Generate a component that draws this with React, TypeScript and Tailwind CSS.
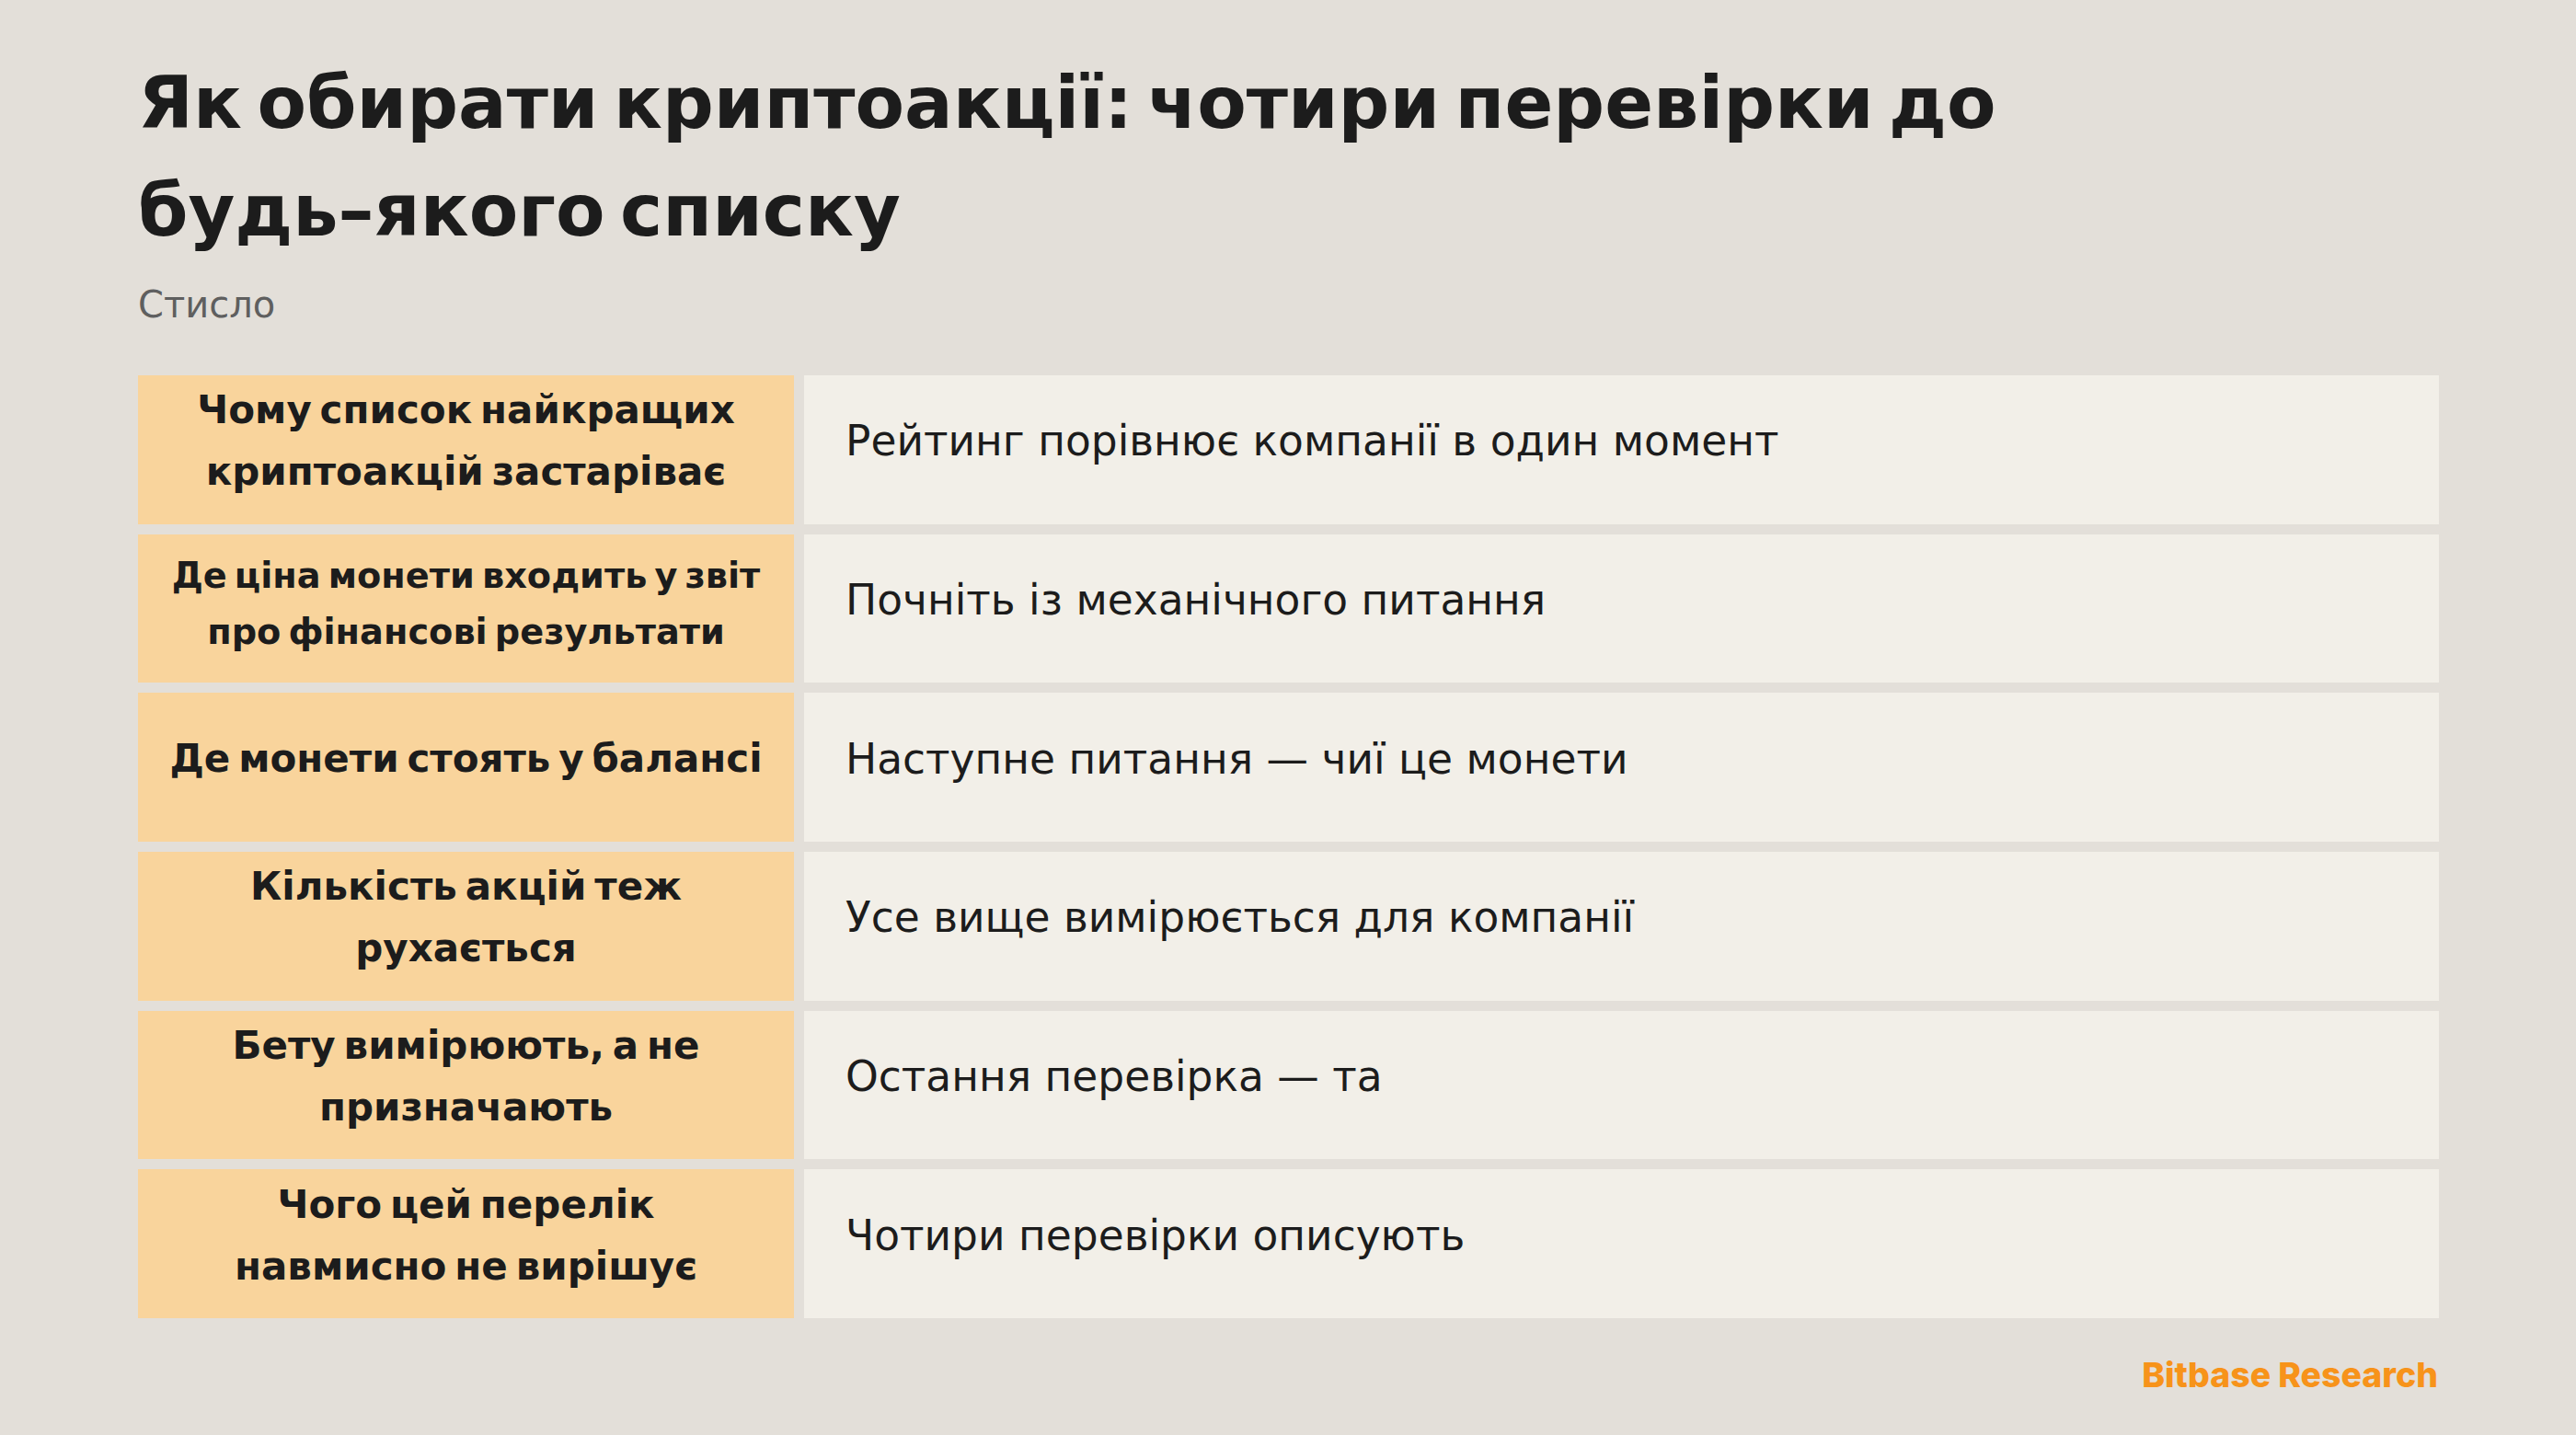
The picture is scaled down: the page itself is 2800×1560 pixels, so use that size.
/**
 * Crypto stocks checklist slide
 */

const rows = [
  {
    title: ["Чому список найкращих", "криптоакцій застаріває"],
    text: "Рейтинг порівнює компанії в один момент",
    size: "text-[42px] leading-[67px] pb-[19px]",
  },
  {
    title: ["Де ціна монети входить у звіт", "про фінансові результати"],
    text: "Почніть із механічного питання",
    size: "text-[38.3px] leading-[61px] pb-[11px]",
  },
  {
    title: ["Де монети стоять у балансі"],
    text: "Наступне питання — чиї це монети",
    size: "text-[42px] leading-[67px] pb-[19px]",
  },
  {
    title: ["Кількість акцій теж", "рухається"],
    text: "Усе вище вимірюється для компанії",
    size: "text-[42px] leading-[67px] pb-[19px]",
  },
  {
    title: ["Бету вимірюють, а не", "призначають"],
    text: "Остання перевірка — та",
    size: "text-[42px] leading-[67px] pb-[19px]",
  },
  {
    title: ["Чого цей перелік", "навмисно не вирішує"],
    text: "Чотири перевірки описують",
    size: "text-[42px] leading-[67px] pb-[19px]",
  },
];

export default function App() {
  return (
    <div className="w-[2800px] h-[1560px] bg-[#e3dfd9] px-[150px] pt-[54px] font-['DejaVu_Sans',sans-serif] text-[#1c1c1c]">
      {/* Heading */}
      <h1 className="text-[78px] leading-[117px] font-bold [word-spacing:-0.137em]">
        Як обирати криптоакції: чотири перевірки до
        <br />
        будь–якого списку
      </h1>
      <p className="mt-[15px] text-[40px] leading-[56px] text-[#5f5f5f]">
        Стисло
      </p>

      {/* Table */}
      <div className="mt-[49px] grid grid-cols-[713px_1777px] gap-[11px]">
        {rows.map((row) => (
          <div key={row.text} className="contents">
            <div
              className={`h-[161.7px] bg-[#f9d49c] flex flex-col items-center justify-center font-bold [word-spacing:-0.137em] ${row.size}`}
            >
              {row.title.map((line) => (
                <span key={line} className="whitespace-nowrap">
                  {line}
                </span>
              ))}
            </div>
            <div className="h-[161.7px] bg-[#f2efe8] flex items-center pl-[45px] pb-[17px]">
              <span className="text-[45.5px] leading-[60px]">{row.text}</span>
            </div>
          </div>
        ))}
      </div>

      {/* Footer */}
      <div className="mt-[38px] flex justify-end">
        <span className="font-['Inter',sans-serif] font-extrabold text-[37.4px] leading-[48px] text-[#f7931a]">
          Bitbase Research
        </span>
      </div>
    </div>
  );
}
